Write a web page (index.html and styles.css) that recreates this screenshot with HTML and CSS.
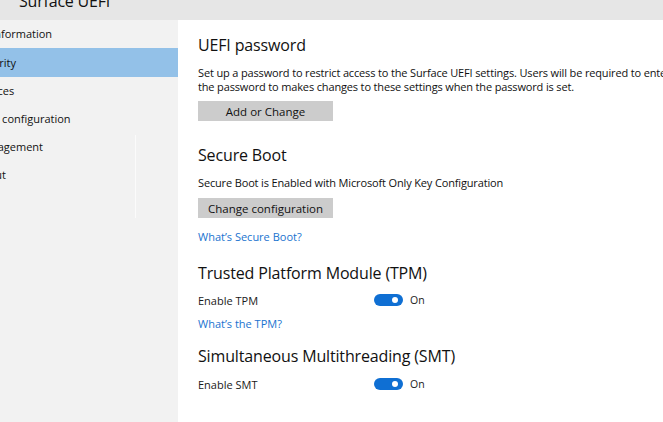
FILE: index.html
```html
<!DOCTYPE html>
<html lang="en">
<head>
    <meta charset="UTF-8">
    <meta name="viewport" content="width=device-width, initial-scale=1.0">
    <title>Surface UEFI</title>
    <link rel="stylesheet" href="styles.css">
</head>
<body>
    <div class="app">
        <!-- title bar -->
        <header class="titlebar">
            <span class="title">Surface UEFI</span>
        </header>

        <div class="frame">
            <!-- left menu -->
            <nav class="sidebar">
                <ul class="menu">
                    <li>PC information</li>
                    <li class="active">Security</li>
                    <li>Devices</li>
                    <li>Boot configuration</li>
                    <li>Management</li>
                    <li>About</li>
                </ul>
                <span class="scroll-track"></span>
            </nav>

            <!-- security page -->
            <main class="content">
                <section class="group group-password">
                    <h2>UEFI password</h2>
                    <p class="desc">Set up a password to restrict access to the Surface UEFI settings. Users will be required to enter<br>the password to makes changes to these settings when the password is set.</p>
                    <button class="btn">Add or Change</button>
                </section>

                <section class="group group-boot">
                    <h2>Secure Boot</h2>
                    <p class="desc">Secure Boot is Enabled with Microsoft Only Key Configuration</p>
                    <button class="btn">Change configuration</button>
                    <a class="link" href="#">What’s Secure Boot?</a>
                </section>

                <section class="group group-tpm">
                    <h2>Trusted Platform Module (TPM)</h2>
                    <div class="row">
                        <span class="row-label">Enable TPM</span>
                        <span class="toggle on"><span class="knob"></span></span>
                        <span class="state">On</span>
                    </div>
                    <a class="link" href="#">What’s the TPM?</a>
                </section>

                <section class="group group-smt">
                    <h2>Simultaneous Multithreading (SMT)</h2>
                    <div class="row">
                        <span class="row-label">Enable SMT</span>
                        <span class="toggle on"><span class="knob"></span></span>
                        <span class="state">On</span>
                    </div>
                </section>
            </main>
        </div>
    </div>
</body>
</html>
```

FILE: styles.css
```css
html, body {
    margin: 0;
    padding: 0;
    height: 100%;
    overflow: hidden;
}
body {
    font-family: "Open Sans", "Noto Sans", sans-serif;
    color: #1a1a1a;
    background: #fff;
}
.app {
    display: flex;
    flex-direction: column;
    height: 422px;
}

/* title bar */
.titlebar {
    height: 20px;
    flex: none;
    background: #e6e6e6;
    overflow: hidden;
    padding-left: 19px;
}
.title {
    display: block;
    font-size: 16px;
    letter-spacing: -0.2px;
    line-height: 20px;
    margin-top: -9px;
    color: #111;
}

.frame {
    flex: 1;
    display: flex;
    min-height: 0;
}

/* left menu */
.sidebar {
    position: relative;
    width: 178px;
    flex: none;
    background: #f2f2f2;
    overflow: hidden;
}
.menu {
    list-style: none;
    margin: 0 0 0 -25px;
    padding: 0;
}
.menu li {
    height: 28px;
    line-height: 28px;
    font-size: 11px;
    white-space: nowrap;
    color: #111;
}
.menu li.active {
    height: 29px;
    line-height: 29px;
    background: #93c1e8;
}
.scroll-track {
    position: absolute;
    left: 135px;
    top: 115px;
    width: 1px;
    height: 83px;
    background: #fbfbfb;
}

/* page content */
.content {
    flex: 1;
    background: #fff;
    padding: 13px 0 0 20px;
    white-space: nowrap;
}
.group h2 {
    margin: 0;
    font-size: 16px;
    letter-spacing: -0.15px;
    font-weight: normal;
    line-height: 24px;
    color: #111;
}
.desc {
    margin: 9px 0 0;
    font-size: 11px;
    letter-spacing: -0.15px;
    line-height: 14px;
    color: #111;
}
.btn {
    display: block;
    width: 135px;
    height: 20px;
    margin-top: 7px;
    padding: 0;
    border: none;
    background: #cccccc;
    font-family: inherit;
    font-size: 11.5px;
    color: #111;
}
.link {
    display: block;
    font-size: 11px;
    line-height: 14px;
    color: #1a73cf;
    text-decoration: none;
}

.group-boot { margin-top: 22px; }
.group-boot .btn { margin-top: 8px; }
.group-boot .link { margin-top: 12px; }
.group-tpm { margin-top: 17px; }
.group-tpm .link { margin-top: 10px; }
.group-smt { margin-top: 13px; }

/* switch rows */
.row {
    display: flex;
    align-items: center;
    height: 14px;
    margin-top: 8px;
    font-size: 11px;
}
.group-smt .row { margin-top: 9px; }
.row-label {
    width: 176px;
}
.toggle {
    position: relative;
    width: 29px;
    height: 12px;
    border-radius: 6px;
    background: #0f6fd3;
}
.knob {
    position: absolute;
    right: 5px;
    top: 3px;
    width: 6px;
    height: 6px;
    border-radius: 50%;
    background: #fff;
}
.state {
    margin-left: 7px;
    font-size: 10.5px;
}
```
